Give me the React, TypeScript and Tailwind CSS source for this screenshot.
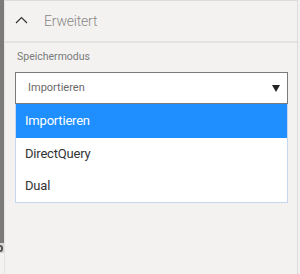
import {useState} from "react";

const OPTIONS = ["Importieren", "DirectQuery", "Dual"];

function App() {
  const [value, setValue] = useState("Importieren");

  return (
    <div
      className="flex w-[300px] h-[274px] overflow-hidden bg-[#f3f2f1]"
      style={{fontFamily: '"Segoe UI", Roboto, "Open Sans", sans-serif'}}
    >
      {/* left neighbour pane edge */}
      <div className="flex flex-col w-[4px] shrink-0">
        <div className="h-[243px] bg-[#7a7a7a]" />
        <div className="h-[10px] bg-[#d6d6d6] flex items-center">
          <div className="w-[3px] h-[7px] rounded-r-full border-2 border-l-0 border-[#555]" />
        </div>
        <div className="flex-1 bg-[#f3f2f1]" />
      </div>
      <div className="w-[1px] shrink-0 bg-[#e6e4e2]" />

      <div className="flex flex-col w-[292px] shrink-0 border-t border-[#dcdcdc]">
        <div className="flex items-center h-[42px] border-b-2 border-[#e4e2e0]">
          <svg width="13" height="8" viewBox="0 0 13 8" className="ml-[10px] mt-[-3px]">
            <path d="M1 7 L6.5 1.5 L12 7" fill="none" stroke="#333" strokeWidth="1.2" />
          </svg>
          <span className="ml-[16px] text-[14px] font-light tracking-[-0.2px] text-[#8a8886]">Erweitert</span>
        </div>

        <div className="pl-[10px] pr-[6px] pt-[8px]">
          <div className="ml-[2px] text-[10.5px] leading-[12px] text-[#7a7a7a]">Speichermodus</div>
          <div className="mt-[9px] w-[273px]">
            <div className="flex items-center justify-between h-[32px] bg-white border border-[#7a7a7a] pl-[12px] pr-[7px]">
              <span className="text-[11px] text-[#6a6a6a]">{value}</span>
              <svg width="8" height="7" viewBox="0 0 8 7">
                <path d="M0 0 H8 L4 7 Z" fill="#252423" />
              </svg>
            </div>
            <ul className="bg-white border border-t-0 border-[#c6d6ee]">
              {OPTIONS.map((o, i) => (
                <li key={o}>
                  <button
                    onClick={() => setValue(o)}
                    className={`flex items-center w-full pl-[9px] text-left text-[13px] tracking-[-0.2px] ${
                      i === 0 ? "h-[34px] bg-[#1f8fff] text-white" : "h-[32px] text-[#333]"
                    }`}
                  >
                    {o}
                  </button>
                </li>
              ))}
            </ul>
          </div>
        </div>
      </div>
      <div className="w-[1px] shrink-0 bg-[#dedcda]" />
    </div>
  );
}

export default App;
